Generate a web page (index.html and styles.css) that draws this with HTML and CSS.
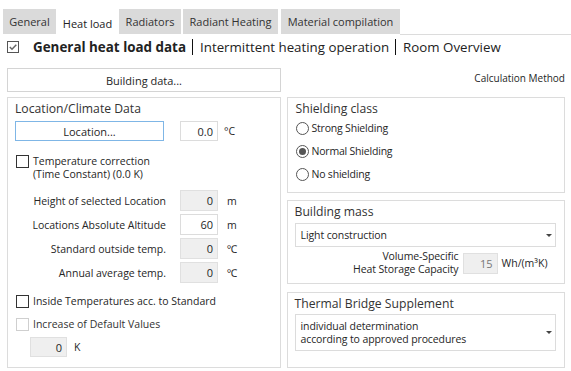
FILE: index.html
```html
<!DOCTYPE html>
<html>
<head>
<meta charset="utf-8">
<link rel="stylesheet" href="styles.css">
</head>
<body>
<div class="tabs">
  <div class="tab t-general">General</div>
  <div class="tab t-heat active">Heat load</div>
  <div class="tab t-rad">Radiators</div>
  <div class="tab t-radiant">Radiant Heating</div>
  <div class="tab t-mat">Material compilation</div>
  <div class="tab-fill"></div>
</div>
<div class="subnav">
  <span class="chk checked"><svg width="10" height="10" viewBox="0 0 10 10"><path d="M1.8 5 L4 7.2 L8.3 2.8" fill="none" stroke="#666" stroke-width="1.5"/></svg></span>
  <span class="sub-active">General heat load data</span>
  <span class="sep"></span>
  <span class="sub">Intermittent heating operation</span>
  <span class="sep"></span>
  <span class="sub">Room Overview</span>
</div>
<div class="toolbar">
  <div class="btn wide">Building data...</div>
  <div class="link">Calculation Method</div>
</div>
<div class="main">
  <div class="group left">
    <div class="gtitle">Location/Climate Data</div>
    <div class="row loc">
      <div class="btn focus">Location...</div>
      <div class="field">0.0</div>
      <span class="unit">°C</span>
    </div>
    <div class="chkrow tc">
      <span class="chk"></span>
      <span class="chklabel">Temperature correction<br>(Time Constant) (0.0 K)</span>
    </div>
    <div class="fields">
      <div class="frow"><span class="flabel">Height of selected Location</span><div class="field ro">0</div><span class="unit">m</span></div>
      <div class="frow"><span class="flabel">Locations Absolute Altitude</span><div class="field">60</div><span class="unit">m</span></div>
      <div class="frow"><span class="flabel">Standard outside temp.</span><div class="field ro">0</div><span class="unit">℃</span></div>
      <div class="frow"><span class="flabel">Annual average temp.</span><div class="field ro">0</div><span class="unit">℃</span></div>
    </div>
    <div class="chkrow it">
      <span class="chk"></span>
      <span class="chklabel">Inside Temperatures acc. to Standard</span>
    </div>
    <div class="chkrow inc">
      <span class="chk dis"></span>
      <span class="chklabel">Increase of Default Values</span>
    </div>
    <div class="krow">
      <div class="field ro small">0</div><span class="unit">K</span>
    </div>
  </div>
  <div class="rightcol">
    <div class="group shield">
      <div class="gtitle">Shielding class</div>
      <div class="radios">
        <div class="radio"><span class="rb"></span>Strong Shielding</div>
        <div class="radio"><span class="rb on"></span>Normal Shielding</div>
        <div class="radio"><span class="rb"></span>No shielding</div>
      </div>
    </div>
    <div class="group mass">
      <div class="gtitle">Building mass</div>
      <div class="select one"><span>Light construction</span><span class="caret"></span></div>
      <div class="caprow">
        <span class="caplabel">Volume-Specific<br>Heat Storage Capacity</span>
        <div class="field ro cap">15</div>
        <span class="unit">Wh/(m³K)</span>
      </div>
    </div>
    <div class="group tb">
      <div class="gtitle">Thermal Bridge Supplement</div>
      <div class="select two"><span>individual determination<br>according to approved procedures</span><span class="caret"></span></div>
    </div>
  </div>
</div>
</body>
</html>
```

FILE: styles.css
```css
* { box-sizing: border-box; }
body {
  margin: 0;
  width: 571px;
  height: 371px;
  background: #fff;
  font-family: "Open Sans", "Noto Sans", sans-serif;
  font-size: 11px;
  color: #262626;
  overflow: hidden;
}
.tabs {
  display: flex;
  align-items: flex-end;
  padding: 9px 0 0 3px;
  height: 35px;
}
.tab {
  height: 25px;
  background: #dadada;
  display: flex;
  align-items: center;
  justify-content: center;
  font-size: 11px;
  color: #333;
  margin-bottom: 1px;
}
.t-general { width: 53px; }
.t-heat { width: 63px; }
.t-rad { width: 62px; }
.t-radiant { width: 95px; margin-left: 2px; }
.t-mat { width: 119px; margin-left: 3px; }
.tab.active {
  background: #fff;
  height: 23px;
  color: #222;
  padding-top: 1px;
}
.tab-fill {
  flex: 1;
  border-bottom: 1px solid #dcdcdc;
  align-self: stretch;
}
.subnav {
  display: flex;
  align-items: center;
  height: 24px;
  padding-left: 7px;
  font-size: 13.3px;
  color: #222;
}
.chk {
  width: 13px;
  height: 13px;
  border: 1px solid #333;
  background: #fff;
  display: inline-flex;
  align-items: center;
  justify-content: center;
  flex: none;
}
.chk.checked { border-color: #555; width: 12px; height: 12px; margin-right: 14px; }
.chk.dis { border-color: #cfcfcf; }
.sub-active { font-weight: 700; font-size: 13.4px; }
.sep {
  width: 1px;
  height: 16px;
  background: #111;
  margin: 0 7px 0 6px;
}
.toolbar {
  display: flex;
  align-items: flex-start;
  justify-content: space-between;
  padding: 9px 6px 0 7px;
}
.btn {
  border: 1px solid #d4d4d4;
  background: #fff;
  display: flex;
  align-items: center;
  justify-content: center;
  font-size: 11px;
}
.btn.wide { width: 274px; height: 24px; }
.link { font-size: 10px; margin-top: 3px; }
.main {
  display: flex;
  gap: 6px;
  padding: 5px 6px 0 7px;
}
.group {
  border: 1px solid #dcdcdc;
  padding: 2px 8px 0 7px;
}
.gtitle {
  font-size: 12.2px;
  color: #333;
  line-height: 17px;
}
.left { width: 274px; height: 271px; }
.row.loc { display: flex; align-items: center; margin-top: 4px; }
.btn.focus { width: 149px; height: 20px; border-color: #7fb6e6; }
.field {
  width: 38px;
  height: 21px;
  border: 1px solid #dcdcdc;
  background: #fff;
  display: flex;
  align-items: center;
  justify-content: flex-end;
  padding-right: 4px;
  font-size: 11px;
}
.field.ro { background: #efefef; border-color: #e0e0e0; }
.row.loc .field { margin-left: 16px; height: 20px; }
.unit { margin-left: 6px; font-size: 10.5px; }
.chkrow { display: flex; align-items: flex-start; }
.chkrow .chk { margin-right: 4px; }
.chklabel { font-size: 10.5px; line-height: 13px; }
.chkrow.tc { margin-top: 14px; margin-left: 1px; }
.fields { margin-top: 9px; display: flex; flex-direction: column; gap: 3px; }
.frow { display: flex; align-items: center; }
.flabel { width: 151px; text-align: right; font-size: 10.5px; margin-right: 14px; }
.frow .unit { margin-left: 9px; }
.chkrow.it { margin-top: 12px; margin-left: 1px; }
.chkrow.inc { margin-top: 10px; margin-left: 1px; }
.chkrow.inc .chklabel { color: #333; }
.krow { display: flex; align-items: center; margin-top: 6px; margin-left: 15px; }
.field.small { width: 37px; height: 20px; }
.krow .unit { margin-left: 7px; }
.rightcol {
  width: 279px;
  display: flex;
  flex-direction: column;
}
.shield { height: 96px; padding-left: 8px; }
.radios { display: flex; flex-direction: column; gap: 10px; margin-top: 5px; }
.radio {
  display: flex;
  align-items: center;
  font-size: 10.5px;
  letter-spacing: -0.2px;
  line-height: 13px;
}
.rb {
  width: 13px;
  height: 13px;
  border-radius: 50%;
  border: 1px solid #555;
  margin-right: 3px;
  display: inline-flex;
  align-items: center;
  justify-content: center;
}
.rb.on::after {
  content: "";
  width: 7px;
  height: 7px;
  border-radius: 50%;
  background: #555;
}
.mass { height: 84px; margin-top: 7px; }
.select {
  border: 1px solid #dcdcdc;
  display: flex;
  align-items: center;
  justify-content: space-between;
  padding: 0 3px 0 5px;
  font-size: 10.5px;
  letter-spacing: -0.1px;
}
.select.one { height: 24px; margin-top: 3px; }
.select.two { height: 37px; line-height: 13px; margin-top: 2px; }
.caret {
  width: 0;
  height: 0;
  border-left: 3px solid transparent;
  border-right: 3px solid transparent;
  border-top: 3px solid #444;
}
.caprow { display: flex; align-items: center; margin-top: 3px; }
.caplabel { width: 164px; text-align: right; font-size: 10.5px; line-height: 13px; letter-spacing: -0.1px; }
.field.cap { margin-left: 4px; width: 35px; height: 21px; color: #777; }
.caprow .unit { margin-left: 4px; }
.tb { height: 76px; margin-top: 8px; }
```
